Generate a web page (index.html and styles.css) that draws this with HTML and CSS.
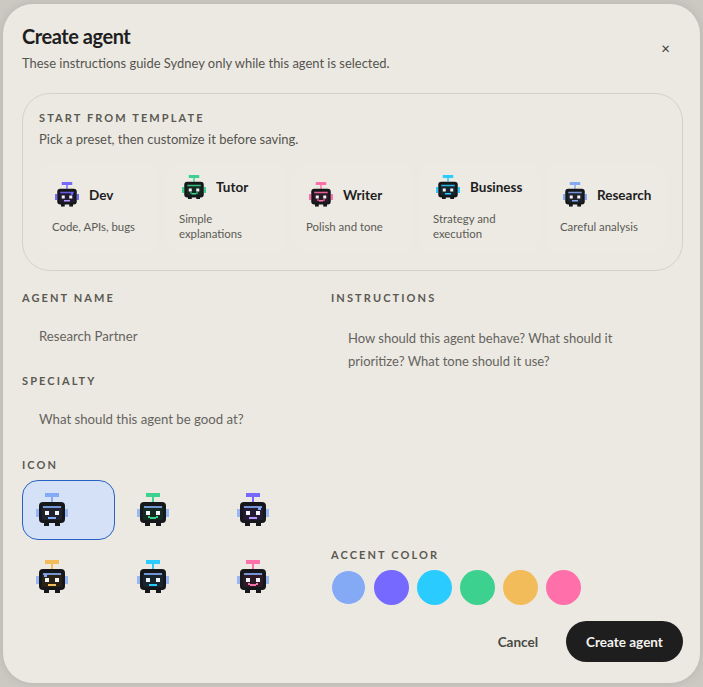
FILE: index.html
```html
<!DOCTYPE html>
<html lang="en">
<head>
  <meta charset="UTF-8">
  <meta name="viewport" content="width=device-width, initial-scale=1.0">
  <title>Create agent</title>
  <link rel="stylesheet" href="styles.css">
</head>
<body>
  <!-- shared robot, colours come from CSS variables -->
  <svg class="defs" width="0" height="0">
    <symbol id="bot" viewBox="0 0 32 33">
      <rect x="9" y="0" width="14" height="4" fill="var(--accent)"/>
      <rect x="15" y="4" width="2" height="5" fill="var(--accent)"/>
      <rect class="ear" x="0" y="16" width="3" height="8" fill="var(--trim)"/>
      <rect class="ear" x="29" y="16" width="3" height="8" fill="var(--trim)"/>
      <rect x="8" y="29" width="5" height="4" fill="#15171b"/>
      <rect x="19" y="29" width="5" height="4" fill="#15171b"/>
      <rect x="3" y="9" width="26" height="21" rx="4" fill="#15171b"/>
      <rect x="6" y="13" width="20" height="14" rx="1" fill="var(--tint)"/>
      <rect class="visor" x="7" y="13" width="18" height="2" fill="var(--trim)"/>
      <rect x="9" y="18" width="4" height="4" fill="var(--eye)"/>
      <rect x="19" y="18" width="4" height="4" fill="var(--eye)"/>
    </symbol>
    <symbol id="mouth-flat" viewBox="0 0 32 33">
      <rect x="12" y="24" width="8" height="2" fill="var(--mouth)"/>
    </symbol>
    <symbol id="mouth-smile" viewBox="0 0 32 33">
      <rect x="11" y="23" width="2" height="2" fill="var(--mouth)"/>
      <rect x="19" y="23" width="2" height="2" fill="var(--mouth)"/>
      <rect x="13" y="24" width="6" height="2" fill="var(--mouth)"/>
    </symbol>
  </svg>

  <div class="dialog">
    <div class="dialog-head">
      <div>
        <h1>Create agent</h1>
        <p class="subtitle">These instructions guide Sydney only while this agent is selected.</p>
      </div>
      <button class="close">×</button>
    </div>

    <section class="templates">
      <div class="label">START FROM TEMPLATE</div>
      <p class="hint">Pick a preset, then customize it before saving.</p>
      <div class="preset-row">
        <div class="preset">
          <div class="preset-head">
            <svg class="bot bot-small purple own-trim"><use href="#bot"/><use href="#mouth-flat"/><rect class="notch" x="15.75" y="10.5" width="2.25" height="2.25"/></svg>
            <span class="preset-name">Dev</span>
          </div>
          <div class="preset-desc">Code, APIs, bugs</div>
        </div>
        <div class="preset">
          <div class="preset-head">
            <svg class="bot bot-small green own-trim"><use href="#bot"/><use href="#mouth-smile"/></svg>
            <span class="preset-name">Tutor</span>
          </div>
          <div class="preset-desc">Simple explanations</div>
        </div>
        <div class="preset">
          <div class="preset-head">
            <svg class="bot bot-small pink own-trim"><use href="#bot"/><use href="#mouth-smile"/></svg>
            <span class="preset-name">Writer</span>
          </div>
          <div class="preset-desc">Polish and tone</div>
        </div>
        <div class="preset">
          <div class="preset-head">
            <svg class="bot bot-small cyan own-trim"><use href="#bot"/><use href="#mouth-flat"/></svg>
            <span class="preset-name">Business</span>
          </div>
          <div class="preset-desc">Strategy and execution</div>
        </div>
        <div class="preset">
          <div class="preset-head">
            <svg class="bot bot-small blue own-trim"><use href="#bot"/><use href="#mouth-flat"/></svg>
            <span class="preset-name">Research</span>
          </div>
          <div class="preset-desc">Careful analysis</div>
        </div>
      </div>
    </section>

    <div class="form-grid">
      <div class="form-left">
        <div class="label">AGENT NAME</div>
        <div class="field">Research Partner</div>
        <div class="label">SPECIALTY</div>
        <div class="field field-last">What should this agent be good at?</div>
        <div class="label">ICON</div>
        <div class="icon-grid">
          <div class="icon-tile selected"><svg class="bot bot-large blue"><use href="#bot"/><use href="#mouth-flat"/></svg></div>
          <div class="icon-tile"><svg class="bot bot-large green"><use href="#bot"/><use href="#mouth-smile"/></svg></div>
          <div class="icon-tile"><svg class="bot bot-large purple"><use href="#bot"/><use href="#mouth-flat"/><rect class="notch" x="21" y="14" width="3" height="3"/></svg></div>
          <div class="icon-tile"><svg class="bot bot-large amber"><use href="#bot"/><use href="#mouth-flat"/><rect class="notch" x="8" y="14" width="3" height="3"/></svg></div>
          <div class="icon-tile"><svg class="bot bot-large cyan"><use href="#bot"/><use href="#mouth-flat"/></svg></div>
          <div class="icon-tile"><svg class="bot bot-large pink"><use href="#bot"/><use href="#mouth-smile"/></svg></div>
        </div>
      </div>
      <div class="form-right">
        <div class="label">INSTRUCTIONS</div>
        <div class="field field-area">How should this agent behave? What should it prioritize? What tone should it use?</div>
        <div class="label">ACCENT COLOR</div>
        <div class="swatches">
          <span class="swatch swatch-on blue"></span>
          <span class="swatch purple"></span>
          <span class="swatch cyan"></span>
          <span class="swatch green"></span>
          <span class="swatch amber"></span>
          <span class="swatch pink"></span>
        </div>
      </div>
    </div>

    <div class="actions">
      <button class="cancel">Cancel</button>
      <button class="create">Create agent</button>
    </div>
  </div>
</body>
</html>
```

FILE: styles.css
```css
* {
  box-sizing: border-box;
}

html, body {
  height: 100%;
}

body {
  margin: 0;
  padding: 4px 3px;
  background-color: #cbc9c2;
  font-family: 'Lato', sans-serif;
  color: #1e1e1e;
  overflow: hidden;
}

.defs {
  position: absolute;
}

.dialog {
  height: 679px;
  padding: 20px 17px 21px 19px;
  background-color: #ece9e2;
  border-radius: 30px;
  box-shadow: 0 0 8px rgba(120, 118, 110, 0.25);
}

.dialog-head {
  display: flex;
  justify-content: space-between;
  align-items: flex-start;
  height: 69px;
}

h1 {
  margin: 0;
  font-size: 20px;
  line-height: 24px;
  font-weight: 700;
  letter-spacing: -0.45px;
}

.subtitle {
  margin: 6px 0 0;
  font-size: 12.95px;
  line-height: 18px;
  color: #55544f;
}

.close {
  margin: 15px 13px 0 0;
  padding: 0;
  border: none;
  background: none;
  font-family: inherit;
  font-size: 15px;
  line-height: 18px;
  color: #3b3b38;
}

.label {
  font-size: 11px;
  line-height: 14px;
  font-weight: 700;
  letter-spacing: 2.1px;
  color: #5a5953;
}

.templates {
  height: 178px;
  padding: 17px 16px 16px;
  border: 1px solid #d3d1ca;
  border-radius: 28px;
}

.hint {
  margin: 6px 0 0;
  font-size: 13px;
  line-height: 16px;
  color: #55544f;
}

.preset-row {
  display: grid;
  grid-template-columns: repeat(5, 1fr);
  gap: 8px;
  margin-top: 15px;
}

.preset {
  display: flex;
  flex-direction: column;
  justify-content: center;
  height: 92px;
  padding: 0 13px;
  background-color: #eceae3;
  border-radius: 16px;
}

.preset-head {
  display: flex;
  align-items: center;
  gap: 10px;
  padding-left: 3px;
}

.preset-name {
  font-size: 13.5px;
  font-weight: 700;
}

.preset-desc {
  margin-top: 12px;
  font-size: 11.4px;
  line-height: 15px;
  color: #5b5a55;
}

.bot {
  display: block;
  flex: none;
  --tint: #20222e;
  --eye: #f3f5fb;
  --trim: #85aaf5;
  --accent: #85aaf5;
  --mouth: #85aaf5;
  --ear-alpha: 1;
}

.bot-small {
  width: 24px;
  height: 24.75px;
}

.bot-large {
  width: 32px;
  height: 33px;
  --ear-alpha: 0.8;
}

.ear {
  opacity: var(--ear-alpha);
}

.visor {
  opacity: 0.85;
}

.notch {
  fill: var(--trim);
}

.bot.blue { --accent: #85aaf5; --mouth: #85aaf5; --tint: #20222e; }
.bot.purple { --accent: #7569ff; --mouth: #b79cff; --tint: #221b33; }
.bot.cyan { --accent: #2accff; --mouth: #2accff; --tint: #16252e; }
.bot.green { --accent: #3dd18f; --mouth: #3dd18f; --tint: #14291f; }
.bot.amber { --accent: #f3bc5a; --mouth: #f3bc5a; --tint: #2a2315; }
.bot.pink { --accent: #ff70ab; --mouth: #ff70ab; --tint: #2c1a26; }
.bot.own-trim { --trim: var(--accent); }

.form-grid {
  display: grid;
  grid-template-columns: 293px 1fr;
  gap: 16px;
  margin-top: 20px;
}

.form-left,
.form-right {
  display: flex;
  flex-direction: column;
}

.field {
  height: 69px;
  padding: 22px 17px 0;
  font-size: 13.2px;
  line-height: 18px;
  color: #65645e;
}

.field-last {
  height: 70px;
}

.field-area {
  flex: 1;
  padding-top: 22px;
  font-size: 13px;
  line-height: 23px;
}

.icon-grid {
  display: grid;
  grid-template-columns: repeat(3, 93px);
  grid-auto-rows: 60px;
  gap: 7px 7.5px;
  margin-top: 8px;
}

.icon-tile {
  display: flex;
  align-items: center;
  padding: 0 0 1px 13px;
  border: 1px solid transparent;
  border-radius: 16px;
}

.icon-tile.selected {
  background-color: #d5e1f6;
  border-color: #2a62c4;
}

.swatches {
  display: flex;
  gap: 8px;
  margin-top: 8px;
  margin-bottom: 2px;
}

.swatch {
  width: 35px;
  height: 35px;
  border-radius: 50%;
}

.swatch.blue { background-color: #85aaf5; }
.swatch.purple { background-color: #7569ff; }
.swatch.cyan { background-color: #2accff; }
.swatch.green { background-color: #3dd18f; }
.swatch.amber { background-color: #f3bc5a; }
.swatch.pink { background-color: #ff70ab; }

.swatch-on {
  border: 1px solid #f2efe9;
}

.actions {
  display: flex;
  justify-content: flex-end;
  align-items: center;
  gap: 28px;
  margin-top: 14px;
}

.cancel,
.create {
  border: none;
  font-family: inherit;
  font-size: 13.5px;
  font-weight: 700;
}

.cancel {
  padding: 0;
  background: none;
  color: #4a4944;
}

.create {
  width: 117px;
  height: 41px;
  background-color: #1e1e1e;
  border-radius: 21px;
  color: #f5f3ee;
}
```
